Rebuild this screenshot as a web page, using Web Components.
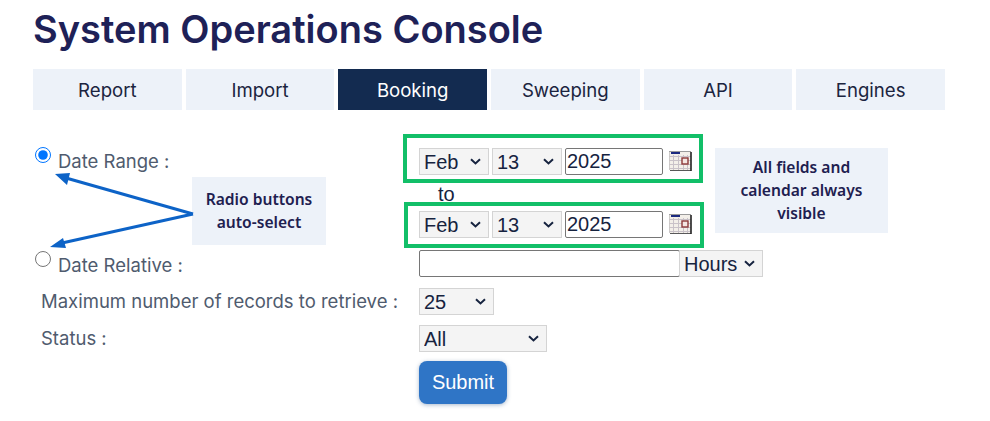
<!DOCTYPE html>
<html>
<head>
<meta charset="utf-8">
<title>System Operations Console</title>
<style>
	html, body { margin: 0; background: #fff; }
</style>
</head>
<body>
<ops-console></ops-console>
<script>
// shared look of the dropdowns, chevron drawn so it sits where the reference has it
const SELECT_CSS = `
	select {
		appearance: none;
		height: 27px;
		box-sizing: border-box;
		padding: 0 0 0 4px;
		border: 1px solid #d4d4d4;
		border-radius: 0;
		background: #f4f4f4 url("data:image/svg+xml,%3Csvg xmlns='http://www.w3.org/2000/svg' width='11' height='7'%3E%3Cpath d='M1 1.2L5.5 5.4L10 1.2' fill='none' stroke='%2316233f' stroke-width='2'/%3E%3C/svg%3E") no-repeat right 7px center;
		color: inherit;
		font: inherit;
	}
`;

class OpsTab extends HTMLElement
{
	constructor ()
	{
		super();
		this.attachShadow({mode:"open"});
		this.shadowRoot.innerHTML = `
			<style>
				:host {
					display: flex;
					align-items: center;
					justify-content: center;
					height: 41px;
					background: #edf2f9;
					color: #1b2440;
					font: 400 18.6px Inter, sans-serif;
				}
				:host([active]) {
					background: #132b50;
					color: #fff;
				}
			</style>
			<slot></slot>
		`;
	}
}
customElements.define("ops-tab", OpsTab);

class CalendarIcon extends HTMLElement
{
	constructor ()
	{
		super();
		this.attachShadow({mode:"open"});
		this.shadowRoot.innerHTML = `
			<style>
				:host { display: block; width: 23px; height: 20px; }
				svg { display: block; }
			</style>
			<svg width="23" height="20" viewBox="0 0 23 20">
				<rect x="0" y="0" width="22" height="19" fill="#f3efe9"/>
				<path d="M0 0H22V1H0Z" fill="#9a9a9a"/>
				<path d="M0 0V19" stroke="#a8a8a8" fill="none"/>
				<rect x="2" y="1" width="9" height="2" fill="#1c2a80"/>
				<path d="M0 5.5H22M0 9.5H22M0 13.5H22M0 17.5H22M4.5 4V19M9.5 4V19M14.5 4V19M18.5 4V19" stroke="#c9c2c8" fill="none"/>
				<rect x="13" y="7" width="6" height="6" fill="#f4e6e2" stroke="#8d3a3a" stroke-width="1.4"/>
				<path d="M22 1V20H1" stroke="#222" stroke-width="1.6" fill="none"/>
			</svg>
		`;
	}
}
customElements.define("calendar-icon", CalendarIcon);

class DateFields extends HTMLElement
{
	constructor ()
	{
		super();
		this.attachShadow({mode:"open"});
		this.shadowRoot.innerHTML = `
			<style>
				:host {
					display: flex;
					align-items: center;
					box-sizing: border-box;
					width: 300px;
					border: 4px solid #12bf68;
					padding: var(--pad, 10px 0 4px 12px);
					font: 20px "Liberation Sans", Arial, sans-serif;
					color: #16233f;
				}
				${SELECT_CSS}
				select {
					width: 70px;
					margin-right: 3px;
				}
				input {
					width: 98px;
					height: 27px;
					box-sizing: border-box;
					padding: 0 1px;
					border: 1px solid #767676;
					border-radius: 2px;
					color: inherit;
					font: inherit;
				}
				calendar-icon { margin-left: 6px; margin-top: -2px; }
			</style>
			<select><option>Feb</option></select>
			<select><option>13</option></select>
			<input type="text" value="2025">
			<calendar-icon></calendar-icon>
		`;
	}
}
customElements.define("date-fields", DateFields);

class NoteBox extends HTMLElement
{
	constructor ()
	{
		super();
		this.attachShadow({mode:"open"});
		this.shadowRoot.innerHTML = `
			<style>
				:host {
					position: absolute;
					display: flex;
					align-items: center;
					justify-content: center;
					box-sizing: border-box;
					background: #edf2f9;
					color: #1e2050;
					font: 600 15.6px/23px "Noto Sans", sans-serif;
					text-align: center;
				}
			</style>
			<div><slot></slot></div>
		`;
	}
}
customElements.define("note-box", NoteBox);

class BookingForm extends HTMLElement
{
	constructor ()
	{
		super();
		this.attachShadow({mode:"open"});
		this.shadowRoot.innerHTML = `
			<style>
				:host {
					display: grid;
					grid-template-columns: 370px 1fr;
					margin-top: 24px;
					font: 18.5px Inter, sans-serif;
					color: #4f5b6e;
				}
				.radio {
					display: flex;
					align-items: flex-start;
					gap: 7px;
					padding-left: 2px;
				}
				.radio input {
					width: 16px;
					height: 16px;
					margin: 0;
				}
				.radio span { line-height: 22px; }
				.fields { display: flex; flex-direction: column; align-items: flex-start; }
				.to {
					height: 19px;
					padding-left: 35px;
					font: 20px/23px "Liberation Sans", Arial, sans-serif;
					color: #16233f;
				}
				.ctl {
					margin-left: 16px;
					font: 20px "Liberation Sans", Arial, sans-serif;
					color: #16233f;
				}
				.label { padding-left: 8px; line-height: 27px; }
				.line { display: flex; align-items: center; height: 27px; }
				.line input {
					width: 261px;
					height: 27px;
					box-sizing: border-box;
					border: 1px solid #767676;
					border-radius: 2px;
				}
				${SELECT_CSS}
				button {
					display: block;
					width: 88px;
					height: 43px;
					border: 0;
					border-radius: 8px;
					background: #2f75c6;
					color: #fff;
					font: 20px "Liberation Sans", Arial, sans-serif;
					box-shadow: 0 1px 4px rgba(40,80,130,.4);
				}
			</style>
			<label class="radio" style="padding-top:13px"><input type="radio" name="when" checked><span style="margin-top:3px">Date Range :</span></label>
			<div class="fields">
				<date-fields></date-fields>
				<div class="to">to</div>
				<date-fields style="--pad:5px 0 6px 11px;margin-left:1px"></date-fields>
			</div>
			<label class="radio" style="margin-top:3px"><input type="radio" name="when"><span style="margin-top:3px">Date Relative :</span></label>
			<div class="ctl line" style="margin-top:2px">
				<input type="text"><select style="width:84px;margin-left:-1px"><option>Hours</option></select>
			</div>
			<div class="label" style="margin-top:11px">Maximum number of records to retrieve :</div>
			<div class="ctl line" style="margin-top:11px"><select style="width:75px"><option>25</option></select></div>
			<div class="label" style="margin-top:10px">Status :</div>
			<div class="ctl line" style="margin-top:10px"><select style="width:128px"><option>All</option></select></div>
			<div></div>
			<div class="ctl" style="margin-top:9px"><button type="button">Submit</button></div>
		`;
	}
}
customElements.define("booking-form", BookingForm);

class OpsConsole extends HTMLElement
{
	constructor ()
	{
		super();
		this.attachShadow({mode:"open"});
		this.shadowRoot.innerHTML = `
			<style>
				:host {
					display: block;
					position: relative;
					height: 421px;
					box-sizing: border-box;
					padding: 0 0 0 33px;
					overflow: hidden;
				}
				h1 {
					margin: 0;
					padding: 7px 0 0 0;
					height: 69px;
					box-sizing: border-box;
					font: 600 38px/44px Inter, sans-serif;
					color: #1e2157;
				}
				nav {
					display: grid;
					grid-template-columns: repeat(6, 1fr);
					column-gap: 4px;
					width: 912px;
				}
				svg.arrows { position: absolute; left: 0; top: 0; pointer-events: none; }
			</style>
			<h1>System Operations Console</h1>
			<nav>
				<ops-tab>Report</ops-tab>
				<ops-tab>Import</ops-tab>
				<ops-tab active>Booking</ops-tab>
				<ops-tab>Sweeping</ops-tab>
				<ops-tab>API</ops-tab>
				<ops-tab>Engines</ops-tab>
			</nav>
			<booking-form></booking-form>
			<note-box style="left:192px;top:177px;width:134px;height:68px">Radio buttons<br>auto-select</note-box>
			<note-box style="left:715px;top:148px;width:173px;height:85px">All fields and<br>calendar always<br>visible</note-box>
			<svg class="arrows" width="990" height="421">
				<path d="M193 214L66 178M193 214L62 243" stroke="#0d63c7" stroke-width="3" fill="none"/>
				<path d="M55 174L70 173L67 185Z M50 247L63 238L66 248Z" fill="#0d63c7"/>
			</svg>
		`;
	}
}
customElements.define("ops-console", OpsConsole);
</script>
</body>
</html>
